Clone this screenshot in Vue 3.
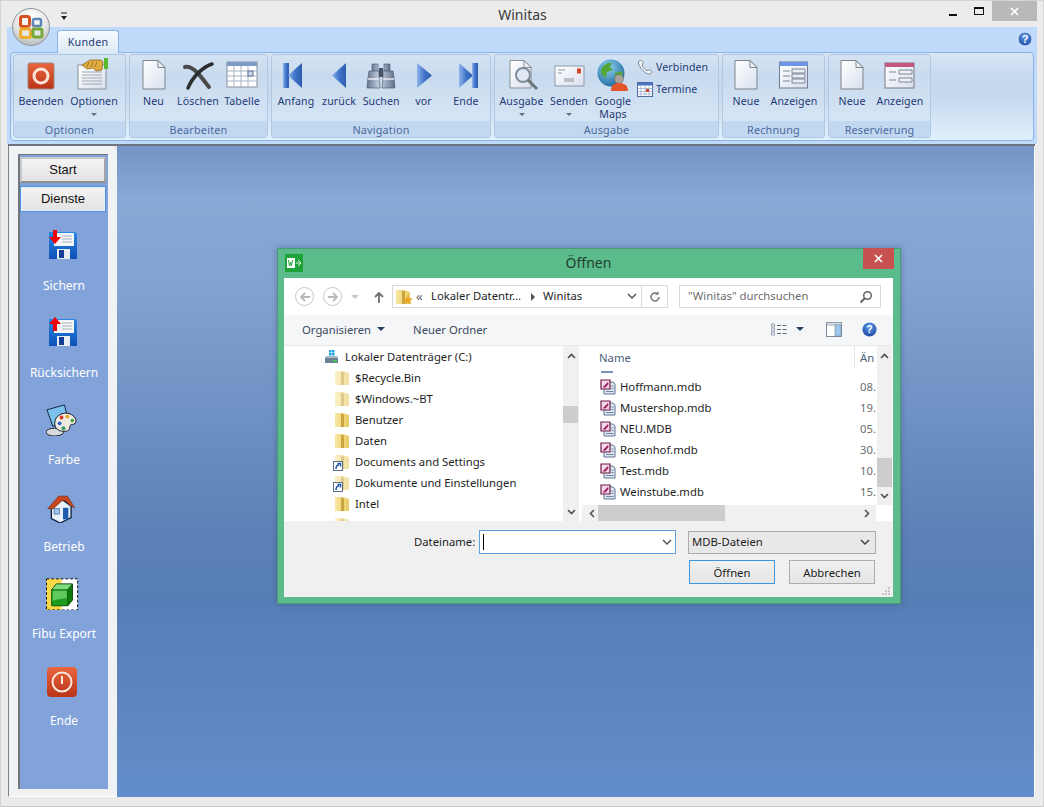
<template>
  <div class="window">
    <!-- shared icons -->
    <svg class="defs" aria-hidden="true">
      <defs>
        <linearGradient id="gDoc" x1="0" y1="0" x2="1" y2="1"><stop offset="0" stop-color="#ffffff" /><stop offset="1" stop-color="#d8e0ee" /></linearGradient>
        <linearGradient id="gBlue" x1="0" y1="0" x2="1" y2="0"><stop offset="0" stop-color="#8fb4ea" /><stop offset=".5" stop-color="#3f74cb" /><stop offset="1" stop-color="#2f5cab" /></linearGradient>
        <linearGradient id="gRed" x1="0" y1="0" x2="0" y2="1"><stop offset="0" stop-color="#e9663f" /><stop offset="1" stop-color="#b93418" /></linearGradient>
        <linearGradient id="gFolder" x1="0" y1="0" x2="1" y2="0"><stop offset="0" stop-color="#f7e7a6" /><stop offset=".6" stop-color="#f3d774" /><stop offset="1" stop-color="#e7ca6a" /></linearGradient>
        <linearGradient id="gFloppy" x1="0" y1="0" x2="0" y2="1"><stop offset="0" stop-color="#2a86e6" /><stop offset="1" stop-color="#0d50b8" /></linearGradient>
        <linearGradient id="gSteel" x1="0" y1="0" x2="1" y2="0"><stop offset="0" stop-color="#66768f" /><stop offset=".45" stop-color="#c8d2e2" /><stop offset="1" stop-color="#5f6e88" /></linearGradient>
        <radialGradient id="gGlobe" cx=".4" cy=".3" r=".8"><stop offset="0" stop-color="#8ed0ee" /><stop offset="1" stop-color="#15619c" /></radialGradient>
        <radialGradient id="gHelp" cx=".5" cy=".3" r=".8"><stop offset="0" stop-color="#5d9be8" /><stop offset="1" stop-color="#173f9e" /></radialGradient>
      </defs>

      <symbol id="i-stop" viewBox="0 -1 34 34">
        <rect x="4" y="4" width="26" height="26" rx="2" fill="url(#gRed)" stroke="#9a8a80" />
        <circle cx="17" cy="17" r="7" fill="none" stroke="#fbe3d8" stroke-width="3" />
      </symbol>
      <symbol id="i-options" viewBox="2 0 34 34">
        <rect x="3" y="7" width="28" height="24" fill="url(#gDoc)" stroke="#8a8f96" />
        <path d="M7 14h20M7 17h20M7 20h20M7 23h20M7 26h20" stroke="#a3a9b0" />
        <path d="M7 7l8-5h11l2 2-1 8-6 1-3-3-6 1z" fill="#e2ab3e" stroke="#8b6a22" stroke-width=".8" />
        <path d="M14 4l-2 5M18 4l-2 5M22 4l-2 5" stroke="#8b6a22" stroke-width=".8" />
        <rect x="29" y="0" width="4" height="11" fill="#5cbb2c" />
      </symbol>
      <symbol id="i-doc" viewBox="0 0 34 34">
        <path d="M6 2.500H21L28 9.500V31H6Z" fill="url(#gDoc)" stroke="#7f848c" />
        <path d="M21 2.500V9.500H28Z" fill="#eef1f6" stroke="#7f848c" />
      </symbol>
      <symbol id="i-cross" viewBox="0 0 34 34">
        <path d="M4 9C12 7 20 19 28 29" fill="none" stroke="#4a4a4a" stroke-width="4" stroke-linecap="round" />
        <path d="M31 6C22 9 12 18 7 30" fill="none" stroke="#2e2e2e" stroke-width="3.500" stroke-linecap="round" />
      </symbol>
      <symbol id="i-table" viewBox="0 0 34 34">
        <rect x="2" y="4" width="30" height="25" fill="#fff" stroke="#8590a0" />
        <rect x="2" y="4" width="30" height="4" fill="#7c9ac8" />
        <path d="M2 13h30M2 18h30M2 23h30M9 8v21M16 8v21M23 8v21" stroke="#a9b4c4" />
        <rect x="23" y="13" width="5" height="5" fill="#c9d6ea" stroke="#5f7092" />
      </symbol>
      <symbol id="i-first" viewBox="0 0 34 34">
        <rect x="4" y="5" width="6" height="25" fill="url(#gBlue)" />
        <path d="M23 5V30L9 17.500Z" fill="url(#gBlue)" />
      </symbol>
      <symbol id="i-prev" viewBox="0 0 34 34">
        <path d="M24 5V30L10 17.500Z" fill="url(#gBlue)" />
      </symbol>
      <symbol id="i-next" viewBox="0 0 34 34">
        <path d="M10 5V30L25 17.500Z" fill="url(#gBlue)" />
      </symbol>
      <symbol id="i-last" viewBox="0 0 34 34">
        <path d="M10 5V30L24 17.500Z" fill="url(#gBlue)" />
        <rect x="23" y="5" width="6" height="25" fill="url(#gBlue)" />
      </symbol>
      <symbol id="i-binoc" viewBox="0 0 34 34">
        <path d="M8 6h6v7H8zM20 6h6v7h-6z" fill="url(#gSteel)" stroke="#4f5d75" stroke-width=".6" />
        <path d="M5 13h10v7l1 10H3l1-10zM19 13h10l1 7 1 10H18l1-10z" fill="url(#gSteel)" stroke="#4f5d75" stroke-width=".7" />
        <rect x="15" y="10" width="4" height="9" fill="#46536a" />
        <path d="M4 21h11M19 21h11" stroke="#e6ebf3" stroke-width="1.500" />
      </symbol>
      <symbol id="i-search-doc" viewBox="-2 0 34 34">
        <path d="M3 2.500H17L24 9.500V30H3Z" fill="url(#gDoc)" stroke="#8a8f96" />
        <path d="M17 2.500V9.500H24Z" fill="#eef1f6" stroke="#8a8f96" />
        <circle cx="16" cy="17" r="7" fill="#dfe9f4" fill-opacity=".8" stroke="#7f8c9c" stroke-width="2" />
        <path d="M21 22l9 9" stroke="#6d747c" stroke-width="3" />
      </symbol>
      <symbol id="i-mail" viewBox="0 0 34 34">
        <rect x="3" y="8" width="29" height="20" fill="url(#gDoc)" stroke="#9199a3" />
        <rect x="25" y="10.500" width="4" height="5" fill="#d2492a" />
        <path d="M6 12h7M6 15h4M12 21h10M12 23h10" stroke="#8a94a2" />
      </symbol>
      <symbol id="i-globe" viewBox="0 0 34 34">
        <circle cx="15" cy="15" r="13.500" fill="url(#gGlobe)" />
        <path d="M5 11c4-6 8-7 11-6l-2 4 3 3-6 2-1 6-5-4zM19 15l7-2 1 5-5 6-3-4z" fill="#54a53a" />
        <circle cx="23" cy="21" r="4.500" fill="#a9a39c" stroke="#6e6258" stroke-width=".6" />
        <path d="M15 33c0-6 3-8 8-8s9 2 9 8z" fill="#e2552b" />
      </symbol>
      <symbol id="i-phone" viewBox="0 0 16 16">
        <path d="M2 2c2-1.500 4 0 4 2 0 1-1 1.500-.5 3 .5 1.500 3 4 4.500 4.500 1 .3 1.500-.5 2.500-.5 2 0 3 2 2 3-2 2-5 1-8-2S0 4 2 2z" fill="#f1f3f6" stroke="#7c8793" />
      </symbol>
      <symbol id="i-cal" viewBox="0 0 16 16">
        <rect x=".5" y="1.500" width="15" height="14" fill="#fff" stroke="#4d6a9c" />
        <rect x=".5" y="1.500" width="15" height="3" fill="#4a74bb" />
        <path d="M.5 7.500h15M.5 10.500h15M.5 13h15M4 4.500v11M8 4.500v11M12 4.500v11" stroke="#8fa6cb" stroke-width=".7" />
        <rect x="9" y="8" width="3" height="3" fill="#d8422c" />
      </symbol>
      <symbol id="i-form-blue" viewBox="0 0 34 34">
        <rect x="2.500" y="4" width="28" height="26" fill="url(#gDoc)" stroke="#6f7d92" />
        <rect x="2.500" y="4" width="28" height="4" fill="#6e96e6" />
        <path d="M6 13h7M6 18h7M6 23h7" stroke="#7a8696" />
        <path d="M15 11h13v4H15zM15 16h13v4H15zM15 21h13v4H15z" fill="#e9eef5" stroke="#7a8696" />
      </symbol>
      <symbol id="i-form-pink" viewBox="0 0 34 34">
        <rect x="2" y="5" width="29" height="25" fill="url(#gDoc)" stroke="#7d7680" />
        <rect x="2" y="5" width="29" height="4" fill="#c4577f" />
        <path d="M6 14h7M6 22h7" stroke="#7a8696" />
        <path d="M16 12h13v4H16zM16 20h13v4H16z" fill="#efeef2" stroke="#7a8696" />
      </symbol>
      <symbol id="i-floppy" viewBox="0 0 34 34">
        <path d="M3 4h26l2 2v25H3z" fill="url(#gFloppy)" />
        <rect x="8" y="5" width="20" height="13" fill="#f4f5f7" />
        <path d="M16 8h10M16 11h10M16 14h10" stroke="#a8b0bb" />
        <rect x="11" y="21" width="13" height="10" fill="#e8ecf3" />
        <rect x="13" y="22" width="5" height="8" fill="#123f95" />
      </symbol>
      <symbol id="i-palette" viewBox="2 -2 35 35">
        <path d="M3 6l18-5 4 16-16 6z" fill="#7cc0f0" stroke="#10263f" />
        <ellipse cx="11" cy="29" rx="9" ry="4" fill="#d7dbe0" stroke="#222" />
        <path d="M11 20c0-8 8-12 15-10 6 2 8 7 6 10-2 2-4 0-5 2-1 3 0 5-4 6-7 1-12-2-12-8z" fill="#f0ebe0" stroke="#1a1a1a" />
        <circle cx="18" cy="14" r="2" fill="#d93a2b" /><circle cx="24" cy="13" r="2" fill="#e8a62a" />
        <circle cx="29" cy="17" r="1.800" fill="#3f9b3c" /><circle cx="16" cy="20" r="2" fill="#2f62c7" /><circle cx="20" cy="25" r="2" fill="#2f9b6c" />
      </symbol>
      <symbol id="i-house" viewBox="0 -5 38 38">
        <path d="M6 14v14l10 5 12-6V14L17 6z" fill="#e8f0fb" stroke="#12233f" stroke-width="1.500" />
        <path d="M2 17L14 3h10l8 13-4-2-6-6-4 0-10 9z" fill="#c9471f" stroke="#7a2b12" stroke-width=".8" />
        <rect x="19" y="16" width="6" height="13" fill="#1f5bb0" />
        <rect x="9" y="17" width="6" height="6" fill="#9cc3ee" stroke="#35567f" stroke-width=".7" />
      </symbol>
      <symbol id="i-fibu" viewBox="0 -2.500 36 36">
        <rect x=".5" y=".5" width="33" height="33" fill="#fff" />
        <rect x=".5" y=".5" width="16" height="33" fill="#f9d949" />
        <rect x=".5" y=".5" width="33" height="33" fill="none" stroke="#000" stroke-dasharray="3 2" />
        <path d="M6 12l5-6h17v17l-5 6H6z" fill="#1c9a1c" stroke="#0d4f0d" />
        <path d="M6 12l5-6h17l-5 6z" fill="#7fdc7f" stroke="#0d4f0d" stroke-width=".7" />
        <path d="M23 12l5-6v17l-5 6z" fill="#0f7c0f" stroke="#0d4f0d" stroke-width=".7" />
        <path d="M7 13h15v8c-5 0-10 1-15 3z" fill="#5fca5f" />
      </symbol>
      <symbol id="i-power" viewBox="1 -2 34 34">
        <rect x="2" y="2" width="30" height="30" rx="4" fill="url(#gRed)" />
        <circle cx="17" cy="17" r="9.500" fill="none" stroke="#fbe8dd" stroke-width="2" />
        <path d="M17 11v8" stroke="#fbe8dd" stroke-width="2" />
      </symbol>
      <symbol id="i-folder" viewBox="0 0 14 16">
        <path d="M0 1h8l6 2v12H0z" fill="url(#gFolder)" />
        <path d="M6 1.500l3 1V15H6z" fill="#c9a544" />
      </symbol>
      <symbol id="i-mdb" viewBox="0 0 16 16">
        <path d="M4 3h9l2 2v10H4z" fill="#dfe7f3" stroke="#5f7391" />
        <path d="M1 1h9v9H1z" fill="#f3d9e8" stroke="#6f1c47" stroke-width="1.200" />
        <path d="M2.500 8.500L8 3l.5 2-3 3.500z" fill="#a01c60" />
        <path d="M11.500 7h2M11.500 9.500h2M6 12.500h7.500" stroke="#6f84a3" />
      </symbol>
    </svg>

    <header class="titlebar">
      <button class="orb" aria-label="Menü">
        <svg width="26" height="26" viewBox="0 0 26 26">
          <rect x="2.500" y="2.500" width="9" height="10" rx="2" fill="none" stroke="#d6501f" stroke-width="3" />
          <rect x="15" y="5" width="8" height="7" rx="1.500" fill="none" stroke="#5a87b8" stroke-width="2.500" />
          <rect x="2.500" y="15" width="10" height="8.500" rx="2" fill="none" stroke="#eeb02c" stroke-width="3" />
          <rect x="15" y="15" width="9" height="8" rx="1.500" fill="none" stroke="#76a83a" stroke-width="3" />
          <path d="M12 10h2M10 13h2M14 13h2M12 16h2" stroke="#c9a28e" stroke-width="1.500" />
        </svg>
      </button>
      <svg class="qat" width="9" height="9" viewBox="0 0 9 9"><path d="M1 1h6" stroke="#222" /><path d="M1 4h6L4 8z" fill="#222" /></svg>
      <div class="app-title">Winitas</div>
      <div class="win-buttons">
        <span class="win-btn min"><i class="min-glyph"></i></span>
        <span class="win-btn max"><i class="max-glyph"></i></span>
        <span class="win-btn close">
          <svg width="9" height="9" viewBox="0 0 9 9"><path d="M1 1l7 7M8 1L1 8" stroke="#fff" stroke-width="1.600" /></svg>
        </span>
      </div>
    </header>

    <section class="ribbon">
      <div class="tabs">
        <div class="tab">Kunden</div>
        <svg class="ribbon-help" width="16" height="16" viewBox="0 0 16 16">
          <circle cx="8" cy="8" r="7" fill="url(#gHelp)" stroke="#dce8f6" />
          <text x="8" y="12" text-anchor="middle" class="help-q">?</text>
        </svg>
      </div>
      <div class="panel">
        <div v-for="group in groups" :key="group.title" class="group" :style="{ width: group.width + 'px' }">
          <div class="group-body">
            <div v-for="item in group.items" :key="item.label" class="tool" :style="{ width: item.w + 'px' }">
              <svg class="tool-icon" width="34" height="34"><use :href="'#' + item.icon" /></svg>
              <span class="tool-label">{{ item.label }}</span>
              <i v-if="item.caret" class="tool-caret"></i>
            </div>
            <div v-if="group.small" class="small-tools">
              <div v-for="s in group.small" :key="s.label" class="small-tool">
                <svg width="16" height="16"><use :href="'#' + s.icon" /></svg>
                <span>{{ s.label }}</span>
              </div>
            </div>
          </div>
          <div class="group-title">{{ group.title }}</div>
        </div>
      </div>
    </section>

    <main class="workspace">
      <aside class="side-frame">
        <nav class="sidebar">
          <button class="side-btn">Start</button>
          <button class="side-btn active">Dienste</button>
          <div class="side-items">
            <div v-for="s in sideItems" :key="s.label" class="side-item">
              <span class="side-icon">
                <svg width="34" height="34"><use :href="'#' + s.icon" /></svg>
                <svg v-if="s.arrow" class="side-arrow" width="14" height="16" viewBox="0 0 14 16">
                  <path v-if="s.arrow === 'down'" d="M5 1h4v7h4l-6 7-6-7h4z" fill="#f00006" />
                  <path v-else d="M5 15h4V8h4L7 1 1 8h4z" fill="#f00006" />
                </svg>
              </span>
              <span class="side-label">{{ s.label }}</span>
            </div>
          </div>
        </nav>
      </aside>

      <div class="desktop">
        <div class="dialog">
          <div class="dlg-title">
            <svg class="dlg-logo" width="18" height="18" viewBox="0 0 18 18">
              <rect width="18" height="18" fill="#1ea33b" />
              <rect x="2" y="4" width="8" height="10" fill="#fff" />
              <path d="M3.500 6l1 6 1-4 1 4 1-6" fill="none" stroke="#1ea33b" />
              <path d="M11 9h5M13 6l3 3-3 3" fill="none" stroke="#dff5e4" />
            </svg>
            <span class="dlg-caption">Öffnen</span>
            <span class="dlg-close">
              <svg width="9" height="9" viewBox="0 0 9 9"><path d="M1 1l7 7M8 1L1 8" stroke="#fff" stroke-width="1.600" /></svg>
            </span>
          </div>

          <div class="dlg-body">
            <div class="addr-row">
              <span class="circle-btn"><svg width="12" height="12" viewBox="0 0 12 12"><path d="M11 6H2M6 2L2 6l4 4" fill="none" stroke="#b8b8b8" stroke-width="1.800" /></svg></span>
              <span class="circle-btn second"><svg width="12" height="12" viewBox="0 0 12 12"><path d="M1 6h9M6 2l4 4-4 4" fill="none" stroke="#b8b8b8" stroke-width="1.800" /></svg></span>
              <i class="tiny-down"></i>
              <svg class="up-arrow" width="12" height="12" viewBox="0 0 12 12"><path d="M6 12V2M2 6l4-4 4 4" fill="none" stroke="#6d6d6d" stroke-width="1.800" /></svg>
              <div class="address">
                <span class="addr-folder">
                  <svg width="14" height="16"><use href="#i-folder" /></svg>
                  <svg class="addr-star" width="10" height="10" viewBox="0 0 10 10"><path d="M5 0l1.400 3.300L10 3.700 7.300 6l.8 3.600L5 7.700 1.900 9.600 2.700 6 0 3.700l3.600-.4z" fill="#eaa526" /></svg>
                </span>
                <span class="addr-back">«</span>
                <span class="addr-part">Lokaler Datentr...</span>
                <i class="addr-sep"></i>
                <span class="addr-part">Winitas</span>
                <svg class="addr-chev" width="10" height="7" viewBox="0 0 10 7"><path d="M1 1l4 4 4-4" fill="none" stroke="#555" stroke-width="1.500" /></svg>
                <span class="addr-refresh">
                  <svg width="12" height="12" viewBox="0 0 12 12"><path d="M10 6a4 4 0 1 1-1.300-3" fill="none" stroke="#777" stroke-width="1.500" /><path d="M9.500 0v3.800H6z" fill="#777" /></svg>
                </span>
              </div>
              <div class="search">
                <span class="search-text">"Winitas" durchsuchen</span>
                <svg width="14" height="14" viewBox="0 0 14 14"><circle cx="8.500" cy="5.500" r="3.800" fill="none" stroke="#666" stroke-width="1.500" /><path d="M6 8l-4.500 4.500" stroke="#666" stroke-width="2" /></svg>
              </div>
            </div>

            <div class="cmd-row">
              <span class="cmd-org">Organisieren</span>
              <i class="cmd-caret"></i>
              <span class="cmd-new">Neuer Ordner</span>
              <svg class="view-icon" width="16" height="13" viewBox="0 0 16 13">
                <path d="M.5 1h3v3h-3zM.5 5h3v3h-3zM.5 9h3v3h-3z" fill="#e9eef6" stroke="#8a93a2" stroke-width=".8" />
                <path d="M6 2.500h4M11.500 2.500h4M6 6.500h4M11.500 6.500h4M6 10.500h4M11.500 10.500h4" stroke="#5f6874" />
              </svg>
              <i class="cmd-caret view-caret"></i>
              <svg class="pane-icon" width="16" height="15" viewBox="0 0 16 15">
                <rect x=".5" y=".5" width="15" height="14" fill="#fff" stroke="#7f8a99" />
                <rect x=".5" y=".5" width="15" height="2.500" fill="#d6dee8" stroke="#7f8a99" stroke-width=".6" />
                <rect x="9" y="3" width="6" height="11" fill="#9cc8f0" stroke="#7f8a99" stroke-width=".6" />
              </svg>
              <svg class="dlg-help" width="15" height="15" viewBox="0 0 16 16">
                <circle cx="8" cy="8" r="7.500" fill="url(#gHelp)" />
                <text x="8" y="12" text-anchor="middle" class="help-q">?</text>
              </svg>
            </div>

            <div class="browser">
              <div class="tree">
                <div class="tree-list">
                  <div class="tree-row drive">
                    <svg width="15" height="15" viewBox="0 0 15 15">
                      <path d="M5 1h2.500v2.500H5zM8 1h2.500v2.500H8zM5 4h2.500v2.500H5zM8 4h2.500v2.500H8z" fill="#1fa6e8" />
                      <path d="M1 9h13v5H1z" fill="#6d8195" />
                      <path d="M2 7h11l1 2H1z" fill="#aab8c6" />
                      <rect x="9" y="11" width="4" height="1.500" fill="#3ed24f" />
                    </svg>
                    <span>Lokaler Datenträger (C:)</span>
                  </div>
                  <div v-for="t in treeItems" :key="t.label" class="tree-row">
                    <span class="tree-icon" :class="{ faded: t.faded }">
                      <svg width="14" height="16"><use href="#i-folder" /></svg>
                      <svg v-if="t.link" class="link-badge" width="10" height="10" viewBox="0 0 10 10">
                        <rect x=".5" y=".5" width="9" height="9" fill="#fff" stroke="#5d6f88" />
                        <path d="M3 8c0-3 1-4 3-4M4.500 2.500H7.500V5.500" fill="none" stroke="#1d56a8" stroke-width="1.500" />
                      </svg>
                    </span>
                    <span>{{ t.label }}</span>
                  </div>
                </div>
                <div class="vscroll tree-scroll">
                  <svg class="chev" width="9" height="6" viewBox="0 0 9 6"><path d="M1 5l3.500-3.500L8 5" fill="none" stroke="#505050" stroke-width="1.600" /></svg>
                  <i class="thumb tree-thumb"></i>
                  <svg class="chev end" width="9" height="6" viewBox="0 0 9 6"><path d="M1 1l3.500 3.500L8 1" fill="none" stroke="#505050" stroke-width="1.600" /></svg>
                </div>
              </div>

              <div class="files">
                <div class="files-top">
                  <div class="files-main">
                    <div class="files-head">
                      <span class="head-name">Name</span>
                      <span class="head-date">Än</span>
                    </div>
                    <div class="file-rows">
                      <div class="clipped-icon"></div>
                      <div v-for="f in files" :key="f.name" class="file-row">
                        <svg width="16" height="16"><use href="#i-mdb" /></svg>
                        <span class="file-name">{{ f.name }}</span>
                        <span class="file-date">{{ f.date }}</span>
                      </div>
                    </div>
                  </div>
                  <div class="vscroll file-scroll">
                    <svg class="chev" width="9" height="6" viewBox="0 0 9 6"><path d="M1 5l3.500-3.500L8 5" fill="none" stroke="#505050" stroke-width="1.600" /></svg>
                    <i class="thumb file-thumb"></i>
                    <svg class="chev end" width="9" height="6" viewBox="0 0 9 6"><path d="M1 1l3.500 3.500L8 1" fill="none" stroke="#505050" stroke-width="1.600" /></svg>
                  </div>
                </div>
                <div class="hscroll-row">
                  <div class="hscroll">
                    <svg width="6" height="9" viewBox="0 0 6 9"><path d="M5 1L1.500 4.500 5 8" fill="none" stroke="#505050" stroke-width="1.600" /></svg>
                    <i class="hthumb"></i>
                    <svg class="hend" width="6" height="9" viewBox="0 0 6 9"><path d="M1 1l3.500 3.500L1 8" fill="none" stroke="#505050" stroke-width="1.600" /></svg>
                  </div>
                </div>
              </div>
            </div>

            <div class="dlg-footer">
              <div class="name-row">
                <label class="name-label">Dateiname:</label>
                <div class="name-input">
                  <i class="text-caret"></i>
                  <svg width="10" height="7" viewBox="0 0 10 7"><path d="M1 1l4 4 4-4" fill="none" stroke="#555" stroke-width="1.500" /></svg>
                </div>
                <div class="type-select">
                  <span class="type-text">MDB-Dateien</span>
                  <svg width="10" height="7" viewBox="0 0 10 7"><path d="M1 1l4 4 4-4" fill="none" stroke="#444" stroke-width="1.500" /></svg>
                </div>
              </div>
              <div class="btn-row">
                <button class="dlg-btn primary">Öffnen</button>
                <button class="dlg-btn">Abbrechen</button>
              </div>
              <svg class="grip" width="9" height="9" viewBox="0 0 9 9">
                <path d="M6 0h2v2H6zM3 3h2v2H3zM6 3h2v2H6zM0 6h2v2H0zM3 6h2v2H3zM6 6h2v2H6z" fill="#c4c4c4" />
              </svg>
            </div>
          </div>
        </div>
      </div>
    </main>
  </div>
</template>

<script setup>
const groups = [
  {
    title: 'Optionen',
    width: 113,
    items: [
      { label: 'Beenden', icon: 'i-stop', w: 50 },
      { label: 'Optionen', icon: 'i-options', w: 56, caret: true }
    ]
  },
  {
    title: 'Bearbeiten',
    width: 139,
    items: [
      { label: 'Neu', icon: 'i-doc', w: 43 },
      { label: 'Löschen', icon: 'i-cross', w: 46 },
      { label: 'Tabelle', icon: 'i-table', w: 42 }
    ]
  },
  {
    title: 'Navigation',
    width: 220,
    items: [
      { label: 'Anfang', icon: 'i-first', w: 44 },
      { label: 'zurück', icon: 'i-prev', w: 42 },
      { label: 'Suchen', icon: 'i-binoc', w: 42.4 },
      { label: 'vor', icon: 'i-next', w: 42.4 },
      { label: 'Ende', icon: 'i-last', w: 42.4 }
    ]
  },
  {
    title: 'Ausgabe',
    width: 225,
    items: [
      { label: 'Ausgabe', icon: 'i-search-doc', w: 49, caret: true },
      { label: 'Senden', icon: 'i-mail', w: 46, caret: true },
      { label: 'Google Maps', icon: 'i-globe', w: 42 }
    ],
    small: [
      { label: 'Verbinden', icon: 'i-phone' },
      { label: 'Termine', icon: 'i-cal' }
    ]
  },
  {
    title: 'Rechnung',
    width: 103,
    items: [
      { label: 'Neue', icon: 'i-doc', w: 42 },
      { label: 'Anzeigen', icon: 'i-form-blue', w: 54 }
    ]
  },
  {
    title: 'Reservierung',
    width: 103,
    items: [
      { label: 'Neue', icon: 'i-doc', w: 42 },
      { label: 'Anzeigen', icon: 'i-form-pink', w: 54 }
    ]
  }
]

const sideItems = [
  { label: 'Sichern', icon: 'i-floppy', arrow: 'down' },
  { label: 'Rücksichern', icon: 'i-floppy', arrow: 'up' },
  { label: 'Farbe', icon: 'i-palette' },
  { label: 'Betrieb', icon: 'i-house' },
  { label: 'Fibu Export', icon: 'i-fibu' },
  { label: 'Ende', icon: 'i-power' }
]

const treeItems = [
  { label: '$Recycle.Bin', faded: true },
  { label: '$Windows.~BT', faded: true },
  { label: 'Benutzer' },
  { label: 'Daten' },
  { label: 'Documents and Settings', faded: true, link: true },
  { label: 'Dokumente und Einstellungen', faded: true, link: true },
  { label: 'Intel' },
  { label: 'MSO Cache', faded: true }
]

const files = [
  { name: 'Hoffmann.mdb', date: '08.' },
  { name: 'Mustershop.mdb', date: '19.' },
  { name: 'NEU.MDB', date: '05.' },
  { name: 'Rosenhof.mdb', date: '30.' },
  { name: 'Test.mdb', date: '10.' },
  { name: 'Weinstube.mdb', date: '15.' }
]
</script>

<style>
html, body { margin: 0; padding: 0; }
</style>

<style scoped>
.window {
  width: 1044px;
  height: 807px;
  box-sizing: border-box;
  display: flex;
  flex-direction: column;
  background: #ebebeb;
  border: 1px solid #d4d4d4;
  border-bottom-color: #c8c8c8;
  overflow: hidden;
  font-family: "Noto Sans", "Open Sans", sans-serif;
}
.defs { display: block; width: 0; height: 0; overflow: hidden; }

/* title bar */
.titlebar { height: 26px; flex: none; display: flex; align-items: flex-start; position: relative; background: #ececec; }
.orb {
  position: absolute;
  left: 11px;
  top: 7px;
  width: 38px;
  height: 38px;
  padding: 0;
  border: 1px solid #8f959b;
  border-radius: 50%;
  background: radial-gradient(circle at 50% 25%, #fff, #e4e4e2 55%, #9ea4a8);
  display: flex;
  align-items: center;
  justify-content: center;
  z-index: 2;
}
.qat { margin: 11px 0 0 59px; }
.app-title { position: absolute; left: 0; right: 0; top: 3px; text-align: center; font-size: 14px; line-height: 22px; color: #3a3a3a; padding-left: 1px; }
.win-buttons { margin-left: auto; display: flex; margin-right: 6px; }
.win-btn { height: 20px; display: flex; align-items: center; justify-content: center; }
.win-btn.min { width: 27px; }
.win-btn.max { width: 26px; }
.win-btn.close { width: 45px; background: #b9b9b9; }
.min-glyph { width: 8px; height: 2px; background: #111; margin-top: 7px; }
.max-glyph { width: 8px; height: 5px; border: 1px solid #111; border-top-width: 2px; }

/* ribbon */
.ribbon { flex: none; height: 117px; box-sizing: border-box; margin: 0 6px; background: #bfdafb; padding: 3px 3px 0 3px; }
.tabs { height: 22px; display: flex; padding-left: 47px; position: relative; }
.tab {
  width: 62px;
  height: 23px;
  box-sizing: border-box;
  border: 1px solid #8db2e3;
  border-bottom: none;
  border-radius: 3px 3px 0 0;
  background: linear-gradient(#f6fafe, #dce9f7);
  font-size: 10.8px;
  letter-spacing: .2px;
  line-height: 22px;
  text-align: center;
  color: #1f3a73;
  position: relative;
  z-index: 1;
}
.ribbon-help { position: absolute; right: 1px; top: 1px; }
.help-q { font: bold 11px "Liberation Sans", sans-serif; fill: #fff; }
.panel {
  height: 89px;
  box-sizing: border-box;
  display: flex;
  gap: 3px;
  padding: 1px 2px;
  border: 1px solid #8db2e3;
  border-radius: 4px;
  background: linear-gradient(#d9e6f5, #c9dbef 22%, #c4d7ec 45%, #dff0fd);
}
.group {
  height: 84px;
  box-sizing: border-box;
  flex: none;
  display: flex;
  flex-direction: column;
  border: 1px solid #b0c8e2;
  border-radius: 3px;
  background: linear-gradient(#d4e3f3, #cbdcf0 20%, #c8daee 25%, #dbe9f8);
}
.group-body { flex: 1; display: flex; padding: 3px 0 0 2px; }
.group-title { height: 16px; flex: none; background: #c2d8f0; font-size: 10.8px; line-height: 18px; text-align: center; color: #4a6a9e; letter-spacing: .2px; }
.tool { flex: none; display: flex; flex-direction: column; align-items: center; text-align: center; }
.tool-icon { flex: none; }
.tool-label { font-size: 10.6px; line-height: 13px; margin-top: 3px; color: #1f3a73; letter-spacing: .1px; }
.tool-caret { width: 0; height: 0; border: 3px solid transparent; border-top: 3px solid #5d6f8e; margin-top: 5px; }
.small-tools { margin: 1px 0 0 3px; display: flex; flex-direction: column; gap: 6px; }
.small-tool { display: flex; align-items: center; gap: 3px; font-size: 10.6px; line-height: 16px; color: #1f3a73; letter-spacing: .1px; }

/* workspace */
.workspace { flex: 1; display: flex; margin: 0 8px 9px 7px; min-height: 0; border-top: 2px solid #6e7480; }
.side-frame { width: 109px; flex: none; box-sizing: border-box; padding: 8px 9px 7px 9px; background: #f1f2f4; border-left: 1px solid #7f838a; border-radius: 0 8px 0 0; border-bottom: 1px solid #fff; }
.sidebar { height: 100%; box-sizing: border-box; padding: 2px 0 0 0; background: #82a3da; border-left: 2px solid #6f7680; border-top: 1px solid #6f7680; display: flex; flex-direction: column; }
.side-btn { width: 86px; height: 26px; flex: none; padding: 0 0 1px; font: 13px "Liberation Sans", sans-serif; color: #111; background: linear-gradient(#f4f4f4, #e2e2e2); border: 2px solid #a4a4a4; border-color: #c9c9c9 #a4a4a4 #8e8e8e #c9c9c9; margin-bottom: 3px; }
.side-btn.active { border: 1px solid #4d94e6; box-shadow: inset 0 0 0 1px #e6f1fc; }
.side-items { margin-top: 13px; width: 88px; }
.side-item { height: 87px; display: flex; flex-direction: column; align-items: center; }
.side-icon { width: 34px; height: 34px; position: relative; display: block; margin-right: 3px; }
.side-arrow { position: absolute; left: 2px; top: 1px; }
.side-label { margin-top: 16px; font-size: 12px; line-height: 16px; color: #fff; white-space: nowrap; }

.desktop {
  flex: 1;
  box-sizing: border-box;
  padding: 102px 0 0 160px;
  border-right: 1px solid #fff;
  background: linear-gradient(#7395c7 0, #88a8d6 8%, #82a2d1 22%, #5c81b6 60%, #567eb6 70%, #648ecb 100%);
}

/* open dialog */
.dialog {
  width: 624px;
  height: 356px;
  box-sizing: border-box;
  padding: 0 7px 6px 6px;
  display: flex;
  flex-direction: column;
  background: #5cbb8b;
  border: 1px solid #4a9a76;
  box-shadow: 0 0 6px rgba(30, 50, 80, .35);
}
.dlg-title { height: 29px; box-sizing: border-box; padding-bottom: 2px; flex: none; display: flex; align-items: center; justify-content: center; position: relative; }
.dlg-logo { position: absolute; left: 1px; top: 5px; }
.dlg-caption { font-size: 14px; color: #21402f; }
.dlg-close { position: absolute; right: -1px; top: -1px; width: 31px; height: 21px; background: #c75050; display: flex; align-items: center; justify-content: center; }
.dlg-body { flex: 1; min-height: 0; display: flex; flex-direction: column; background: #fff; font-size: 11.3px; color: #1e1e1e; }

.addr-row { height: 37px; flex: none; display: flex; align-items: center; padding-left: 11px; box-sizing: border-box; }
.circle-btn { width: 17px; height: 17px; border: 1px solid #c8c8c8; border-radius: 50%; display: flex; align-items: center; justify-content: center; flex: none; }
.circle-btn.second { margin-left: 9px; }
.tiny-down { width: 0; height: 0; border: 4px solid transparent; border-top: 4px solid #c8c8c8; border-bottom: none; margin-left: 9px; }
.up-arrow { margin-left: 14px; }
.address { width: 276px; height: 23px; box-sizing: border-box; margin-left: 7px; border: 1px solid #d9d9d9; display: flex; align-items: center; padding-left: 3px; }
.addr-folder { position: relative; width: 15px; height: 16px; display: block; }
.addr-star { position: absolute; right: -2px; bottom: 0; }
.addr-back { margin: 0 0 2px 5px; width: 15px; color: #666; font-size: 13px; line-height: 14px; }
.addr-part { white-space: nowrap; margin-bottom: 2px; }
.addr-sep { width: 0; height: 0; border: 4px solid transparent; border-left: 4px solid #555; border-right: none; margin: 0 8px 0 10px; }
.addr-chev { margin-left: auto; margin-right: 4px; }
.addr-refresh { width: 25px; height: 21px; border-left: 1px solid #d9d9d9; display: flex; align-items: center; justify-content: center; }
.search { width: 202px; height: 23px; box-sizing: border-box; margin-left: 11px; padding: 0 7px 0 8px; border: 1px solid #d9d9d9; display: flex; align-items: center; justify-content: space-between; color: #6d6d6d; }
.search-text { margin-bottom: 2px; }

.cmd-row { height: 31px; flex: none; box-sizing: border-box; display: flex; align-items: center; padding: 0 16px 2px 18px; background: #f5f6f7; border-bottom: 1px solid #e6e8eb; color: #3b4a60; }
.cmd-caret { width: 0; height: 0; border: 4px solid transparent; border-top: 4px solid #27405f; border-bottom: none; margin-left: 6px; }
.cmd-new { margin-left: 28px; }
.view-icon { margin-left: auto; }
.view-caret { margin-left: 9px; }
.pane-icon { margin-left: 22px; }
.dlg-help { margin-left: 20px; }

.browser { height: 175px; flex: none; display: flex; }
.tree { width: 295px; flex: none; display: flex; }
.tree-list { flex: 1; overflow: hidden; padding-left: 40px; }
.tree-row { height: 21px; display: flex; align-items: center; gap: 6px; white-space: nowrap; padding-left: 11px; }
.tree-row.drive { padding-left: 0; gap: 6px; }
.tree-icon { width: 14px; height: 16px; position: relative; display: block; }
.tree-icon.faded svg:first-child { opacity: .6; }
.link-badge { position: absolute; left: -2px; bottom: -1px; }
.vscroll { width: 16px; flex: none; background: #f0f0f0; display: flex; flex-direction: column; align-items: center; position: relative; }
.chev { margin-top: 7px; flex: none; }
.chev.end { margin-top: auto; margin-bottom: 6px; }
.thumb { position: absolute; left: 0; right: 1px; background: #cdcdcd; }
.tree-thumb { top: 60px; height: 17px; }
.file-thumb { top: 112px; height: 29px; }
.files { flex: 1; min-width: 0; margin-left: 2px; display: flex; flex-direction: column; }
.files-top { height: 159px; display: flex; }
.files-main { width: 296px; flex: none; display: flex; flex-direction: column; }
.files-head { height: 24px; box-sizing: border-box; padding-bottom: 1px; flex: none; display: flex; align-items: center; color: #4c607a; position: relative; }
.head-name { margin-left: 18px; }
.head-date { margin-left: auto; width: 23px; box-sizing: border-box; padding-left: 5px; height: 100%; line-height: 23px; border-left: 1px solid #e5e5e5; margin-right: 0; overflow: hidden; }
.file-rows { flex: 1; overflow: hidden; }
.clipped-icon { height: 3px; width: 12px; margin: 0 0 3px 20px; box-sizing: border-box; border-bottom: 2px solid #7a93bd; }
.file-row { height: 21px; display: flex; align-items: center; padding-left: 19px; margin-top: 0; }
.file-name { margin-left: 4px; }
.file-date { margin-left: auto; width: 17px; overflow: hidden; color: #6d6d6d; }
.file-scroll { width: 15px; }
.file-scroll .thumb { right: 0; }
.hscroll-row { height: 16px; flex: none; display: flex; }
.hscroll { width: 294px; margin-left: 1px; background: #f0f0f0; display: flex; align-items: center; padding-left: 7px; box-sizing: border-box; position: relative; }
.hthumb { position: absolute; left: 16px; width: 127px; top: 0; bottom: 0; background: #cdcdcd; }
.hend { margin-left: auto; margin-right: 6px; }

.dlg-footer { flex: 1; background: #f0f0f0; position: relative; min-height: 0; }
.name-row { display: flex; align-items: center; padding: 9px 0 0 130px; }
.name-label { width: 60px; white-space: nowrap; margin-bottom: 2px; }
.name-input { width: 197px; height: 24px; box-sizing: border-box; margin-left: 5px; border: 1px solid #5e9fd8; background: #fff; display: flex; align-items: center; justify-content: space-between; padding: 0 3px 0 3px; }
.text-caret { width: 1px; height: 16px; background: #000; }
.type-select { width: 188px; height: 23px; box-sizing: border-box; margin-left: 12px; padding: 0 5px 0 3px; border: 1px solid #acacac; background: #e8e8e8; display: flex; align-items: center; justify-content: space-between; }
.type-text { margin-bottom: 2px; }
.btn-row { display: flex; gap: 14px; padding: 6px 0 0 405px; }
.dlg-btn { width: 86px; height: 24px; padding: 0; font: 11.3px "Noto Sans", "Open Sans", sans-serif; color: #1e1e1e; background: linear-gradient(#f0f0f0, #e5e5e5); border: 1px solid #acacac; }
.dlg-btn.primary { border-color: #3f94dc; }
.grip { position: absolute; right: 2px; bottom: 1px; }
</style>
